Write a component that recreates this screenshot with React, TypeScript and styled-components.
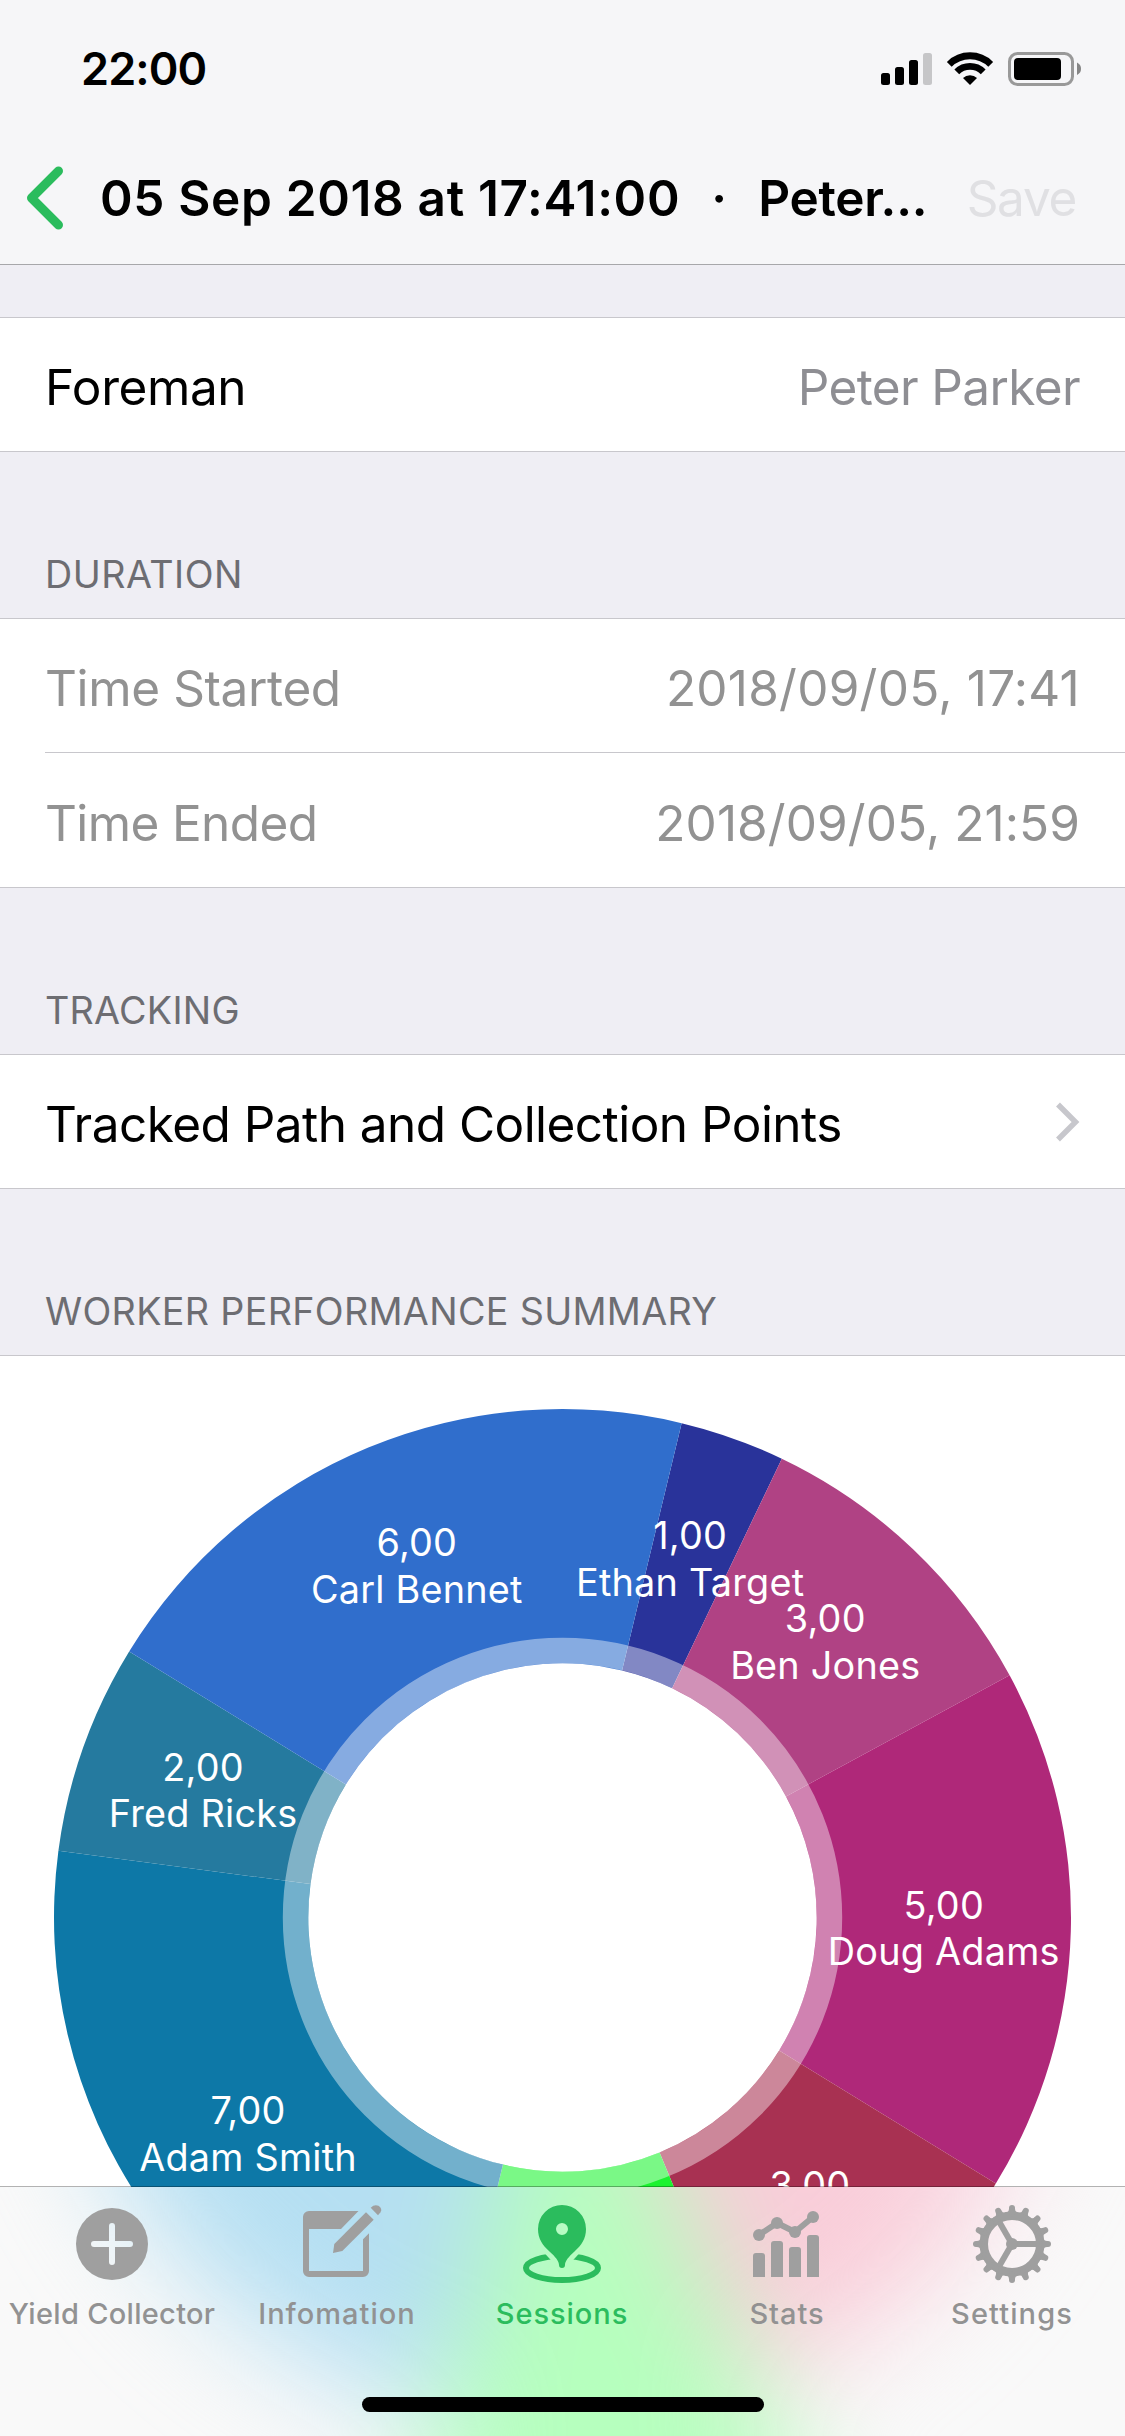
import React from "react";
import styled, { createGlobalStyle } from "styled-components";

const GlobalStyle = createGlobalStyle`
  *, *::before, *::after { box-sizing: border-box; }
  html, body { margin: 0; padding: 0; background: #efeef4; }
  body { font-family: Inter, "Liberation Sans", sans-serif; }
`;

const Screen = styled.div`
  position: relative;
  display: flex;
  flex-direction: column;
  width: 1125px;
  height: 2436px;
  overflow: hidden;
  background: #efeef4;
  color: #000;
`;

const Header = styled.header`
  flex: none;
  height: 265px;
  background: #f6f6f8;
  border-bottom: 1px solid #a7a7aa;
`;

const StatusBar = styled.div`
  display: flex;
  align-items: center;
  justify-content: space-between;
  height: 132px;
  padding: 5px 44px 0 81px;
`;

const Clock = styled.span`
  font-size: 45px;
  font-weight: 600;
  letter-spacing: -0.9px;
`;

const StatusIcons = styled.svg`
  display: block;
  width: 201px;
  height: 34px;
`;

const NavBar = styled.div`
  display: flex;
  align-items: center;
  height: 132px;
  padding: 0 49px 0 24px;
`;

const BackIcon = styled.svg`
  flex: none;
  width: 44px;
  height: 66px;
`;

const Title = styled.h1`
  display: flex;
  margin: 0 0 0 32px;
  font-size: 49.5px;
  font-weight: 600;
  line-height: 66px;
  white-space: nowrap;
`;

const TitlePart = styled.span<{ $tracking: number }>`
  letter-spacing: ${(p) => p.$tracking}px;
`;

const TitleDot = styled.span`
  width: 78px;
  text-align: center;
`;

const SaveButton = styled.button`
  margin-left: auto;
  padding: 0;
  border: 0;
  background: none;
  color: #e0e0e3;
  font: inherit;
  font-size: 49.5px;
  line-height: 66px;
  letter-spacing: -1.3px;
`;

const Content = styled.main`
  flex: none;
  height: 1922px;
  padding-top: 52px;
  overflow: hidden;
`;

const SectionHeader = styled.h2<{ $tracking: number }>`
  display: flex;
  align-items: flex-end;
  height: 166px;
  margin: 0;
  padding: 0 45px 21px;
  color: #6d6d72;
  font-size: 37.7px;
  font-weight: 400;
  line-height: 46px;
  letter-spacing: ${(p) => p.$tracking}px;
`;

const Group = styled.section`
  border-top: 1px solid #c8c7cc;
  border-bottom: 1px solid #c8c7cc;
  background: #fff;
`;

const Row = styled.div<{ $muted?: boolean; $tall?: boolean }>`
  display: flex;
  align-items: center;
  justify-content: space-between;
  height: ${(p) => (p.$tall ? 134 : 133)}px;
  padding: 5px 45px 0;
  color: ${(p) => (p.$muted ? "#929292" : "#000")};
  font-size: 49.5px;
`;

const RowLabel = styled.span<{ $tracking: number }>`
  letter-spacing: ${(p) => p.$tracking}px;
`;

const RowValue = styled.span<{ $color?: string; $tracking: number }>`
  color: ${(p) => p.$color ?? "inherit"};
  letter-spacing: ${(p) => p.$tracking}px;
`;

const Separator = styled.div`
  height: 1px;
  margin-left: 45px;
  background: #c8c7cc;
`;

const Disclosure = styled.svg`
  width: 25px;
  height: 40px;
  margin-top: -5px;
`;

const Chart = styled.svg`
  display: block;
  width: 1125px;
  height: 1125px;
`;

const ChartLabel = styled.text`
  fill: #fff;
  font-size: 37.8px;
  letter-spacing: 0.22px;
  text-anchor: middle;
`;

const TabBar = styled.nav`
  position: relative;
  flex: none;
  height: 249px;
  overflow: hidden;
  background: #f9f9f9;
`;

const Glow = styled.svg`
  position: absolute;
  left: 0;
  top: -831px;
  width: 1125px;
  height: 1300px;
  overflow: visible;
  filter: blur(57px);
`;

const TabBarContent = styled.div`
  position: relative;
  display: flex;
  flex-direction: column;
`;

const TabBarEdge = styled.div`
  position: absolute;
  left: 0;
  right: 0;
  bottom: 249px;
  height: 1px;
  background: rgba(0, 0, 0, 0.3);
`;

const Tabs = styled.div`
  display: grid;
  grid-template-columns: repeat(5, 1fr);
  height: 147px;
`;

const Tab = styled.button<{ $active?: boolean }>`
  display: flex;
  flex-direction: column;
  align-items: center;
  padding: 17px 1px 0 0;
  border: 0;
  background: none;
  color: ${(p) => (p.$active ? "#2bbc5d" : "#9f9f9f")};
  font: inherit;
`;

const TabIcon = styled.svg`
  flex: none;
  width: 80px;
  height: 81px;
  overflow: visible;
`;

const TabLabel = styled.span<{ $active?: boolean; $tracking: number }>`
  margin-top: 11px;
  color: ${(p) => (p.$active ? "#2bbc5d" : "#929292")};
  font-size: 29px;
  font-weight: 500;
  line-height: 36px;
  letter-spacing: ${(p) => p.$tracking}px;
  white-space: nowrap;
`;

const HomeIndicator = styled.div`
  width: 402px;
  height: 15px;
  margin: 63px auto 0;
  border-radius: 8px;
  background: #000;
`;

const slices = [
  { name: "Ethan Target", value: 1, color: "#29339a" },
  { name: "Ben Jones", value: 3, color: "#b04284" },
  { name: "Doug Adams", value: 5, color: "#af2879", glow: "#fad9e6" },
  { name: "", value: 3, color: "#a83152", glow: "#f9cdd9" },
  { name: "", value: 3, color: "#1bf32f", glow: "#b6ffbe" },
  { name: "Adam Smith", value: 7, color: "#0d78a7", glow: "#b5dff2" },
  { name: "Fred Ricks", value: 2, color: "#257a9f" },
  { name: "Carl Bennet", value: 6, color: "#306ecc" },
];

const CX = 562.5;
const CY = 561.5;
const OUTER = 508.5;
const HOLE = 254.2;
const RING = 279.7;
const START = 13.55;

const polar = (r: number, deg: number) => {
  const a = (deg * Math.PI) / 180;
  return [CX + r * Math.sin(a), CY - r * Math.cos(a)];
};

const slicePath = (from: number, to: number) => {
  const [x0, y0] = polar(OUTER, from);
  const [x1, y1] = polar(OUTER, to);
  const [x2, y2] = polar(HOLE, to);
  const [x3, y3] = polar(HOLE, from);
  return `M${x0} ${y0}A${OUTER} ${OUTER} 0 0 1 ${x1} ${y1}L${x2} ${y2}A${HOLE} ${HOLE} 0 0 0 ${x3} ${y3}Z`;
};

const wedgePath = (r: number, from: number, to: number) => {
  const [x0, y0] = polar(r, from);
  const [x1, y1] = polar(r, to);
  return `M${CX} ${CY}L${x0} ${y0}A${r} ${r} 0 0 1 ${x1} ${y1}Z`;
};

const total = slices.reduce((sum, s) => sum + s.value, 0);
const arcs = slices.map((s, i) => {
  const before = slices.slice(0, i).reduce((sum, p) => sum + p.value, 0);
  const from = START + (before / total) * 360;
  return { ...s, from, to: from + (s.value / total) * 360 };
});

function DonutChart() {
  return (
    <Chart viewBox="0 0 1125 1125">
      {arcs.map((a) => (
        <path key={a.from} d={slicePath(a.from, a.to)} fill={a.color} />
      ))}
      <circle
        cx={CX}
        cy={CY}
        r={(RING + HOLE) / 2}
        fill="none"
        stroke="#fff"
        strokeOpacity={0.42}
        strokeWidth={RING - HOLE}
      />
      {arcs.map((a) => {
        const [x, y] = polar(OUTER * 0.75, (a.from + a.to) / 2);
        return (
          <g key={a.from}>
            <ChartLabel x={x} y={y - 9}>{`${a.value},00`}</ChartLabel>
            {a.name && (
              <ChartLabel x={x} y={y + 37.5}>
                {a.name}
              </ChartLabel>
            )}
          </g>
        );
      })}
    </Chart>
  );
}

/* The chart colours that show through the translucent tab bar. */
function ChartGlow() {
  return (
    <Glow viewBox="0 0 1125 1300">
      {arcs
        .filter((a) => a.glow)
        .map((a) => (
          <path
            key={a.from}
            d={wedgePath(a.color === "#1bf32f" ? 700 : OUTER, a.from, a.to)}
            fill={a.glow}
          />
        ))}
    </Glow>
  );
}

const YieldIcon = () => (
  <TabIcon viewBox="0 0 80 81">
    <mask id="plus-cut">
      <rect width="81" height="81" fill="#fff" />
      <path d="M40 22v36M22 40h36" stroke="#000" strokeWidth="6" strokeLinecap="round" />
    </mask>
    <circle cx="40" cy="40" r="36" fill="currentColor" mask="url(#plus-cut)" />
  </TabIcon>
);

const InformationIcon = () => (
  <TabIcon viewBox="0 0 80 81" fill="currentColor">
    <path d="M12 7H61.500L44 25H12V67H66V35.300L72 29.300V67a6 6 0 0 1-6 6H12a6 6 0 0 1-6-6V13a6 6 0 0 1 6-6Z" />
    <path d="M69 8.300 76.700 15.700 45.300 46.900 36 49 37.300 40.100Z" />
    <path d="M73.700 3.700Q77.500 0 81.500 1.800 85.800 5 83.500 8.300L81 11.200Z" />
  </TabIcon>
);

const SessionsIcon = () => (
  <TabIcon viewBox="0 0 80 81" fill="currentColor">
    <mask id="ring-gap" maskUnits="userSpaceOnUse" x="-5" y="0" width="95" height="95">
      <rect x="-5" width="95" height="95" fill="#fff" />
      <path d="M21.500 48 31.500 59H48.500L58.500 48Z" fill="#000" />
    </mask>
    <ellipse
      cx="40"
      cy="64"
      rx="36"
      ry="12"
      fill="none"
      stroke="currentColor"
      strokeWidth="6"
      mask="url(#ring-gap)"
    />
    <path
      fillRule="evenodd"
      d="M16 25a24 24 0 0 1 48 0c0 10-4.500 16-11.500 22.500-6 5.500-9.500 9.500-9.500 13.500a3 3 0 0 1-6 0c0-4-3.500-8-9.500-13.500C20.500 41 16 35 16 25Zm24-6a6 6 0 1 0 0 12a6 6 0 1 0 0-12Z"
    />
  </TabIcon>
);

const StatsIcon = () => (
  <TabIcon viewBox="0 0 80 81" fill="currentColor">
    <path d="M6 73V52a3 3 0 0 1 3-3h6a3 3 0 0 1 3 3v21Z" />
    <path d="M24 73V40a3 3 0 0 1 3-3h6a3 3 0 0 1 3 3v33Z" />
    <path d="M42 73V46a3 3 0 0 1 3-3h6a3 3 0 0 1 3 3v27Z" />
    <path d="M60 73V34a3 3 0 0 1 3-3h6a3 3 0 0 1 3 3v39Z" />
    <path d="M12 31 30 19 48 28 66 13" fill="none" stroke="currentColor" strokeWidth="6" />
    <circle cx="12" cy="31" r="6" />
    <circle cx="30" cy="19" r="6" />
    <circle cx="48" cy="28" r="6" />
    <circle cx="66" cy="13" r="6" />
  </TabIcon>
);

const SettingsIcon = () => (
  <TabIcon viewBox="0 0 80 81" fill="none" stroke="currentColor">
    <circle cx="40" cy="40" r="28.250" strokeWidth="8.500" />
    {Array.from({ length: 16 }, (_, i) => (
      <g key={i} transform={`rotate(${i * 22.5} 40 40)`}>
        <path d="M40 10V4" strokeWidth="6" strokeLinecap="round" />
        <path d="M34.800 8.500Q37 7.600 37 5H43Q43 7.600 45.200 8.500Z" fill="currentColor" stroke="none" />
      </g>
    ))}
    {[0, 120, 240].map((deg) => (
      <path key={deg} d="M40 40H66" strokeWidth="6" transform={`rotate(${deg} 40 40)`} />
    ))}
    <circle cx="40" cy="40" r="6" fill="currentColor" stroke="none" />
  </TabIcon>
);

const tabs = [
  { label: "Yield Collector", tracking: 0.3, Icon: YieldIcon },
  { label: "Infomation", tracking: 1, Icon: InformationIcon },
  { label: "Sessions", tracking: 0.95, Icon: SessionsIcon, active: true },
  { label: "Stats", tracking: 0.95, Icon: StatsIcon },
  { label: "Settings", tracking: 1.1, Icon: SettingsIcon },
];

export default function App() {
  return (
    <Screen>
      <GlobalStyle />
      <Header>
        <StatusBar>
          <Clock>22:00</Clock>
          <StatusIcons viewBox="0 0 201 34">
            <rect x="1" y="21" width="9" height="12" rx="2.500" />
            <rect x="15" y="15" width="9" height="18" rx="2.500" />
            <rect x="29" y="8" width="9" height="25" rx="2.500" />
            <rect x="43" y="1" width="9" height="32" rx="2.500" fill="#c6c6c8" />
            <g fill="none" stroke="#000" strokeWidth="6.800">
              <path d="M69.300 12.300a29.300 29.300 0 0 1 41.400 0" />
              <path d="M76.800 19.800a18.700 18.700 0 0 1 26.400 0" />
            </g>
            <path d="M90 33 83 26a10 10 0 0 1 14 0Z" />
            <rect x="129.500" y="1.500" width="63" height="31" rx="8" fill="none" stroke="#999" strokeWidth="3" />
            <rect x="134" y="6" width="47" height="22" rx="4" />
            <path d="M197 10.500q4 2 4 6.300t-4 6.200Z" fill="#868686" />
          </StatusIcons>
        </StatusBar>
        <NavBar>
          <BackIcon viewBox="0 0 44 66">
            <path
              d="M34.500 6 7.500 33 34.500 60"
              fill="none"
              stroke="#2bbc5d"
              strokeWidth="9"
              strokeLinecap="round"
              strokeLinejoin="round"
            />
          </BackIcon>
          <Title>
            <TitlePart $tracking={0.66}>05 Sep 2018 at 17:41:00</TitlePart>
            <TitleDot>·</TitleDot>
            <TitlePart $tracking={-0.25}>Peter...</TitlePart>
          </Title>
          <SaveButton>Save</SaveButton>
        </NavBar>
      </Header>

      <Content>
        <Group>
          <Row>
            <RowLabel $tracking={-0.4}>Foreman</RowLabel>
            <RowValue $color="#8e8e93" $tracking={-0.62}>Peter Parker</RowValue>
          </Row>
        </Group>

        <SectionHeader $tracking={0.5}>DURATION</SectionHeader>
        <Group>
          <Row $muted>
            <RowLabel $tracking={-0.38}>Time Started</RowLabel>
            <RowValue $tracking={0.25}>2018/09/05, 17:41</RowValue>
          </Row>
          <Separator />
          <Row $muted $tall>
            <RowLabel $tracking={-0.62}>Time Ended</RowLabel>
            <RowValue $tracking={0.08}>2018/09/05, 21:59</RowValue>
          </Row>
        </Group>

        <SectionHeader $tracking={0.25}>TRACKING</SectionHeader>
        <Group>
          <Row>
            <RowLabel $tracking={-0.54}>Tracked Path and Collection Points</RowLabel>
            <Disclosure viewBox="0 0 25 40">
              <path d="M3 2.500 20.500 20 3 37.500" fill="none" stroke="#c7c7cc" strokeWidth="5.500" />
            </Disclosure>
          </Row>
        </Group>

        <SectionHeader $tracking={0.32}>WORKER PERFORMANCE SUMMARY</SectionHeader>
        <Group>
          <DonutChart />
        </Group>
      </Content>

      <TabBarEdge />
      <TabBar>
        <ChartGlow />
        <TabBarContent>
          <Tabs>
            {tabs.map(({ label, tracking, Icon, active }) => (
              <Tab key={label} $active={active}>
                <Icon />
                <TabLabel $active={active} $tracking={tracking}>
                  {label}
                </TabLabel>
              </Tab>
            ))}
          </Tabs>
          <HomeIndicator />
        </TabBarContent>
      </TabBar>
    </Screen>
  );
}
